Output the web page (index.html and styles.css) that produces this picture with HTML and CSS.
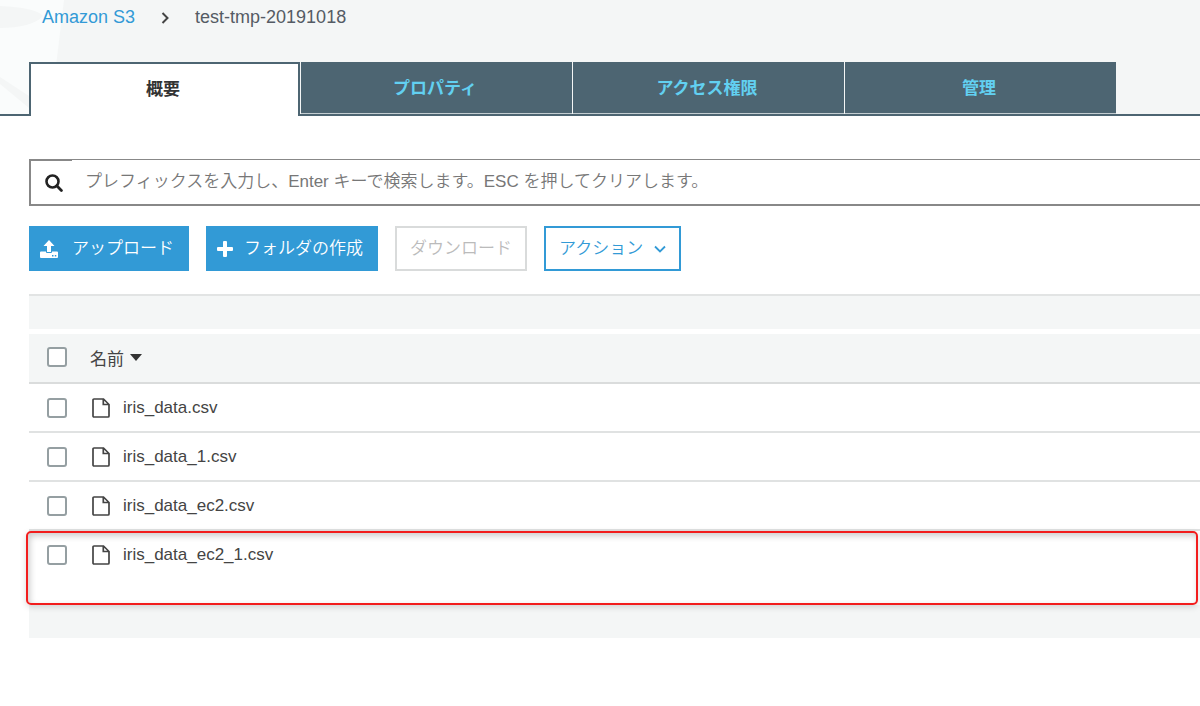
FILE: index.html
```
<!DOCTYPE html>
<html lang="ja">
<head>
    <meta charset="UTF-8">
    <meta name="viewport" content="width=device-width, initial-scale=1.0">
    <title>test-tmp-20191018 - Amazon S3</title>
    <link rel="stylesheet" href="styles.css">
</head>
<body>
    <header class="header">
        <svg class="bucket" viewBox="0 0 64 114" width="64" height="114" aria-hidden="true">
            <path d="M0 0h64L56 66v48H0z" fill="#fafcfc"/>
            <path d="M0 6C22 7 38 10 43 16 36 24 20 28 0 28z" fill="#f4f6f6"/>
            <path d="M0 77l29 19v12L0 84z" fill="#f4f6f6"/>
        </svg>
        <nav class="breadcrumb">
            <a href="#">Amazon S3</a>
            <svg width="8" height="12" viewBox="0 0 8 12" aria-hidden="true">
                <path d="M1.5 1l5 5-5 5" fill="none" stroke="#444" stroke-width="2"/>
            </svg>
            <span>test-tmp-20191018</span>
        </nav>
        <div class="tabs" role="tablist">
            <button class="tab active" role="tab" aria-selected="true">概要</button>
            <button class="tab" role="tab">プロパティ</button>
            <button class="tab" role="tab">アクセス権限</button>
            <button class="tab" role="tab">管理</button>
        </div>
    </header>

    <main class="content">
        <div class="search">
            <label class="search-icon" for="prefix" aria-label="検索">
                <svg width="18" height="18" viewBox="0 0 18 18" aria-hidden="true">
                    <circle cx="7.5" cy="7.5" r="6" fill="none" stroke="#222" stroke-width="2.6"/>
                    <path d="M11.8 11.8l4.6 4.6" stroke="#222" stroke-width="2.8" stroke-linecap="round"/>
                </svg>
            </label>
            <input type="text" id="prefix" placeholder="プレフィックスを入力し、Enter キーで検索します。ESC を押してクリアします。">
        </div>

        <div class="actions">
            <button class="btn primary">
                <svg width="18" height="18" viewBox="0 0 18 18" fill="#fff" aria-hidden="true">
                    <path d="M9 0l5.5 6H11v6H7V6H3.500z"/>
                    <path fill-rule="evenodd" d="M1 11.500h5V12q0 1 1 1h4q1 0 1-1v-.5h5q1 0 1 1V17q0 1-1 1H1q-1 0-1-1v-4.500q0-1 1-1zM12 15v1.500h1.500V15zM14.800 15v1.500h1.500V15z"/>
                </svg>
                <span>アップロード</span>
            </button>
            <button class="btn primary add">
                <svg width="16" height="16" viewBox="0 0 16 16" fill="#fff" aria-hidden="true">
                    <path d="M7 0h2q1 0 1 1v5h5q1 0 1 1v2q0 1-1 1h-5v5q0 1-1 1H7q-1 0-1-1v-5H1q-1 0-1-1V7q0-1 1-1h5V1q0-1 1-1z"/>
                </svg>
                <span>フォルダの作成</span>
            </button>
            <button class="btn" disabled><span>ダウンロード</span></button>
            <button class="btn outline">
                <span>アクション</span>
                <svg width="12" height="8" viewBox="0 0 12 8" aria-hidden="true">
                    <path d="M1 1.500l5 5 5-5" fill="none" stroke="#329ad6" stroke-width="1.800"/>
                </svg>
            </button>
        </div>

        <div class="pager"></div>
        <table class="objects">
            <thead>
                <tr>
                    <th class="check"><input type="checkbox" aria-label="すべて選択"></th>
                    <th>
                        <span class="sort">名前
                            <svg width="12" height="7" viewBox="0 0 12 7" aria-hidden="true"><path d="M0 0h12L6 7z" fill="#333"/></svg>
                        </span>
                    </th>
                </tr>
            </thead>
            <tbody>
                <tr>
                    <td class="check"><input type="checkbox" id="f1"></td>
                    <td>
                        <label class="file" for="f1">
                            <svg width="18" height="20" viewBox="0 0 18 20" aria-hidden="true"><path d="M2 1h9.500L17 6.500V18q0 1-1 1H2q-1 0-1-1V2q0-1 1-1zM11.300 1v5.500H17" fill="none" stroke="#444" stroke-width="1.700"/></svg>
                            iris_data.csv
                        </label>
                    </td>
                </tr>
                <tr>
                    <td class="check"><input type="checkbox" id="f2"></td>
                    <td>
                        <label class="file" for="f2">
                            <svg width="18" height="20" viewBox="0 0 18 20" aria-hidden="true"><path d="M2 1h9.500L17 6.500V18q0 1-1 1H2q-1 0-1-1V2q0-1 1-1zM11.300 1v5.500H17" fill="none" stroke="#444" stroke-width="1.700"/></svg>
                            iris_data_1.csv
                        </label>
                    </td>
                </tr>
                <tr>
                    <td class="check"><input type="checkbox" id="f3"></td>
                    <td>
                        <label class="file" for="f3">
                            <svg width="18" height="20" viewBox="0 0 18 20" aria-hidden="true"><path d="M2 1h9.500L17 6.500V18q0 1-1 1H2q-1 0-1-1V2q0-1 1-1zM11.300 1v5.500H17" fill="none" stroke="#444" stroke-width="1.700"/></svg>
                            iris_data_ec2.csv
                        </label>
                    </td>
                </tr>
                <tr class="marked">
                    <td class="check"><input type="checkbox" id="f4"></td>
                    <td>
                        <label class="file" for="f4">
                            <svg width="18" height="20" viewBox="0 0 18 20" aria-hidden="true"><path d="M2 1h9.500L17 6.500V18q0 1-1 1H2q-1 0-1-1V2q0-1 1-1zM11.300 1v5.500H17" fill="none" stroke="#444" stroke-width="1.700"/></svg>
                            iris_data_ec2_1.csv
                        </label>
                    </td>
                </tr>
            </tbody>
        </table>
        <div class="table-footer"></div>
    </main>
</body>
</html>
```
FILE: styles.css
```
* {
    box-sizing: border-box;
}
body {
    margin: 0;
    background-color: #fff;
    color: #444;
    font-family: "Liberation Sans", "Noto Sans CJK JP", sans-serif;
    font-size: 17px;
}
button, input {
    font-family: inherit;
    font-size: inherit;
}
svg {
    flex: none;
}

/* header */
.header {
    position: relative;
    background-color: #f4f6f6;
}
.bucket {
    position: absolute;
    top: 0;
    left: 0;
}
.breadcrumb {
    position: relative;
    display: flex;
    align-items: center;
    gap: 26px;
    padding: 6px 42px 0;
    height: 29px;
    font-size: 18px;
    color: #545b64;
}
.breadcrumb a {
    color: #329ad6;
    text-decoration: none;
}
.tabs {
    position: relative;
    display: flex;
    gap: 1px;
    margin-top: 33px;
    padding-left: 29px;
    border-bottom: 2px solid #4d6572;
}
.tab {
    flex: 0 1 271px;
    height: 52px;
    padding: 0 3px 2px 0;
    border: none;
    border-bottom: 1px solid #c3cdd1;
    background-color: #4d6572;
    color: #62d0f1;
    font-weight: bold;
    cursor: pointer;
}
.tab.active {
    height: 54px;
    margin-bottom: -2px;
    padding-bottom: 6px;
    border: 2px solid #4d6572;
    border-bottom: none;
    background-color: #fff;
    color: #333;
}

/* search */
.content {
    padding: 43px 0 0 29px;
}
.search {
    display: flex;
    height: 47px;
    border-bottom: 2px solid #888;
    border-left: 2px solid #888;
}
.search-icon {
    display: flex;
    align-items: center;
    width: 41px;
    padding-left: 14px;
    border-top: 2px solid #888;
}
.search input {
    flex: 1;
    min-width: 0;
    padding: 0 13px;
    border: none;
    border-top: 1px solid #888;
    outline: none;
    background: none;
    color: #444;
    font-weight: 350;
}
.search input::placeholder {
    color: #777;
    opacity: 1;
}

/* buttons */
.actions {
    display: flex;
    gap: 17px;
    margin: 20px 0 23px;
}
.btn {
    display: flex;
    align-items: center;
    gap: 14px;
    height: 45px;
    padding: 0 13px;
    border: 2px solid #d9dbdb;
    background-color: #fff;
    font-weight: 350;
    cursor: pointer;
}
.btn span {
    padding-bottom: 4px;
}
.btn:disabled {
    color: #bbb;
    cursor: default;
}
.btn.primary {
    padding: 0 13px 0 9px;
    border-color: #329ad6;
    background-color: #329ad6;
    color: #fff;
}
.btn.add {
    gap: 11px;
}
.btn.outline {
    gap: 11px;
    border-color: #329ad6;
    color: #329ad6;
}

/* object list */
.pager {
    height: 35px;
    margin-bottom: 5px;
    border-top: 2px solid #e2e4e4;
    background-color: #f4f6f6;
}
.objects {
    width: 100%;
    border-collapse: separate;
    border-spacing: 0;
    text-align: left;
}
th, td {
    height: 49px;
    padding: 0;
    border-bottom: 2px solid #e0e2e2;
    font-weight: normal;
}
th {
    height: 50px;
    padding-bottom: 2px;
    border-color: #dadcdc;
    background-color: #f4f6f6;
}
.check {
    width: 61px;
    padding-left: 18px;
}
input[type="checkbox"] {
    display: block;
    width: 20px;
    height: 20px;
    margin: 0;
    appearance: none;
    border: 2px solid #959fa2;
    border-radius: 3px;
    background-color: #fff;
}
input[type="checkbox"]:checked {
    background-color: #329ad6;
}
.sort {
    display: flex;
    align-items: center;
    gap: 6px;
}
.file {
    display: flex;
    align-items: center;
    gap: 13px;
    padding-left: 2px;
}
.marked {
    position: relative;
}
.marked td {
    height: 74px;
    padding-bottom: 26px;
    border-bottom: none;
}
/* red frame drawn around the new file */
.marked::after {
    content: "";
    position: absolute;
    inset: 0 2px 0 -3px;
    border: 2px solid #f21d1d;
    border-radius: 5px;
    box-shadow: 0 2px 6px rgba(0, 0, 0, 0.15), inset 2px 3px 6px rgba(0, 0, 0, 0.2);
    pointer-events: none;
}
.table-footer {
    height: 33px;
    background-color: #f4f6f6;
}
```
